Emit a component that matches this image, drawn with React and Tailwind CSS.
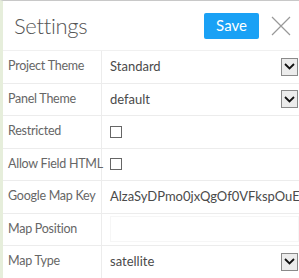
import React from "react";

const rows = [
  { label: "Project Theme", type: "select", value: "Standard" },
  { label: "Panel Theme", type: "select", value: "default" },
  { label: "Restricted", type: "checkbox" },
  { label: "Allow Field HTML", type: "checkbox" },
  { label: "Google Map Key", type: "text", value: "AlzaSyDPmo0jxQgOf0VFkspOuE" },
  { label: "Map Position", type: "input" },
  { label: "Map Type", type: "select", value: "satellite" },
];

const Chevron = () => (
  <span className="flex h-[18px] w-[17px] shrink-0 items-center justify-center border border-[#8a8a8a] bg-[#ececec]">
    <svg width="11" height="7" viewBox="0 0 11 7" fill="none">
      <path d="M1 1l4.5 4.5L10 1" stroke="#111" strokeWidth="1.8" />
    </svg>
  </span>
);

const Value = ({ row }) => {
  if (row.type === "select")
    return (
      <div className="flex h-full items-center justify-between pr-[1px]">
        <span>{row.value}</span>
        <Chevron />
      </div>
    );
  if (row.type === "checkbox")
    return (
      <div className="flex h-full items-center">
        <span className="h-[12px] w-[12px] border border-[#666] bg-white" />
      </div>
    );
  if (row.type === "input")
    return (
      <div className="flex h-full items-center">
        <div className="h-[26px] w-full border border-[#f6f6f6]" />
      </div>
    );
  return <div className="flex h-full items-center whitespace-nowrap">{row.value}</div>;
};

export default function App() {
  return (
    <div
      className="h-[278px] w-[299px] overflow-hidden border-l-[3px] border-t border-l-[#e6eedb] border-t-[#c8c8c8] bg-white"
      style={{ fontFamily: "Lato, sans-serif" }}
    >
      <div className="flex h-[50px] items-center justify-between border-b border-[#f0f0f0] pl-[11px] pr-[8px]">
        <h1 className="text-[22px] font-light tracking-[-0.3px] text-[#555]">Settings</h1>
        <div className="flex items-center gap-[12px]">
          <button className="h-[26px] w-[55px] rounded-[2px] bg-[#1aa1f5] text-[15px] text-white">
            Save
          </button>
          <svg width="20" height="20" viewBox="0 0 20 20">
            <path d="M1 1l18 18M19 1L1 19" stroke="#999" strokeWidth="1.2" />
          </svg>
        </div>
      </div>
      {rows.map((row) => (
        <div
          key={row.label}
          className="grid h-[32.5px] grid-cols-[99px_1fr] border-b border-[#ececec]"
        >
          <div className="flex items-center whitespace-nowrap border-r border-[#ececec] pl-[5px] text-[12.5px] tracking-[-0.25px] text-[#666]">
            {row.label}
          </div>
          <div className="overflow-hidden pl-[8px] text-[13px] text-[#4a4a4a]">
            <Value row={row} />
          </div>
        </div>
      ))}
    </div>
  );
}
